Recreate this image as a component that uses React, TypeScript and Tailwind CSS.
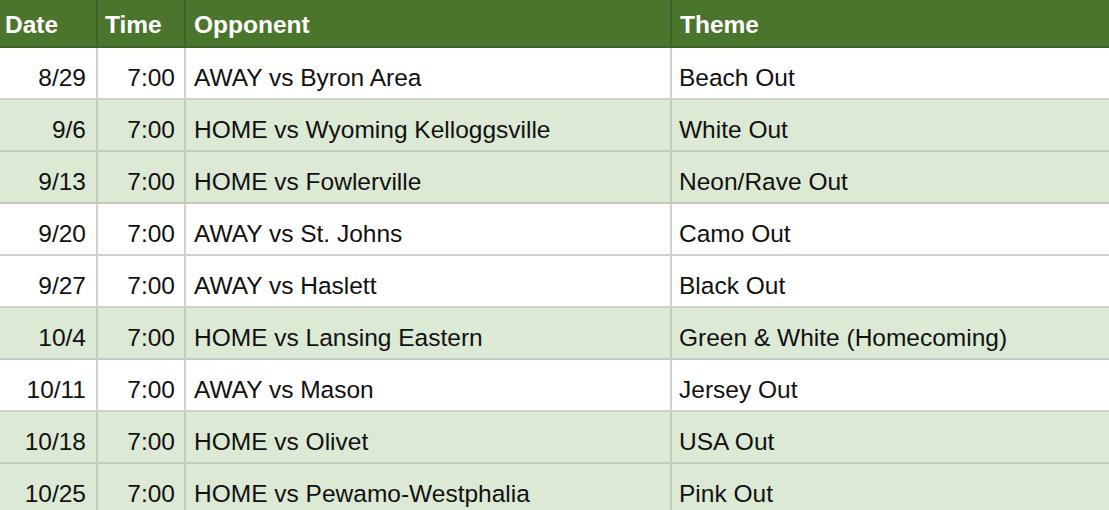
import React from "react";

type Game = { date: string; time: string; opponent: string; theme: string; home: boolean };

const games: Game[] = [
  { date: "8/29", time: "7:00", opponent: "AWAY vs Byron Area", theme: "Beach Out", home: false },
  { date: "9/6", time: "7:00", opponent: "HOME vs Wyoming Kelloggsville", theme: "White Out", home: true },
  { date: "9/13", time: "7:00", opponent: "HOME vs Fowlerville", theme: "Neon/Rave Out", home: true },
  { date: "9/20", time: "7:00", opponent: "AWAY vs St. Johns", theme: "Camo Out", home: false },
  { date: "9/27", time: "7:00", opponent: "AWAY vs Haslett", theme: "Black Out", home: false },
  { date: "10/4", time: "7:00", opponent: "HOME vs Lansing Eastern", theme: "Green & White (Homecoming)", home: true },
  { date: "10/11", time: "7:00", opponent: "AWAY vs Mason", theme: "Jersey Out", home: false },
  { date: "10/18", time: "7:00", opponent: "HOME vs Olivet", theme: "USA Out", home: true },
  { date: "10/25", time: "7:00", opponent: "HOME vs Pewamo-Westphalia", theme: "Pink Out", home: true },
];

const cols = "grid grid-cols-[98px_88px_486px_1fr]";

export default function App() {
  return (
    <div className="w-[1109px] h-[510px] overflow-hidden bg-white font-['Liberation_Sans',Arial,sans-serif] text-[24.5px] text-[#111]">
      {/* Header */}
      <div className={`${cols} h-[48px] bg-[#4b752d] border-b-2 border-[#3e6126] text-white font-bold`}>
        <div className="flex items-center pt-[4px] px-[5px] border-r-2 border-[#3e6126]">Date</div>
        <div className="flex items-center pt-[4px] px-[7px] border-r-2 border-[#3e6126]">Time</div>
        <div className="flex items-center pt-[4px] px-[8px] border-r-2 border-[#3e6126]">Opponent</div>
        <div className="flex items-center pt-[4px] px-[8px]">Theme</div>
      </div>

      {games.map((g, i) => {
        const line = g.home ? "border-[#c3cbbf]" : "border-[#d0d0d0]";
        return (
          <div
            key={i}
            className={`${cols} h-[52px] border-b-2 ${g.home ? "bg-[#dce9d5]" : "bg-white"} ${line}`}
          >
            <div className={`flex items-center justify-end pt-[10px] pr-[10px] border-r-2 ${line}`}>{g.date}</div>
            <div className={`flex items-center justify-end pt-[10px] pr-[9px] border-r-2 ${line}`}>{g.time}</div>
            <div className={`flex items-center pt-[10px] px-[8px] border-r-2 ${line}`}>{g.opponent}</div>
            <div className="flex items-center pt-[10px] px-[7px]">{g.theme}</div>
          </div>
        );
      })}
    </div>
  );
}
